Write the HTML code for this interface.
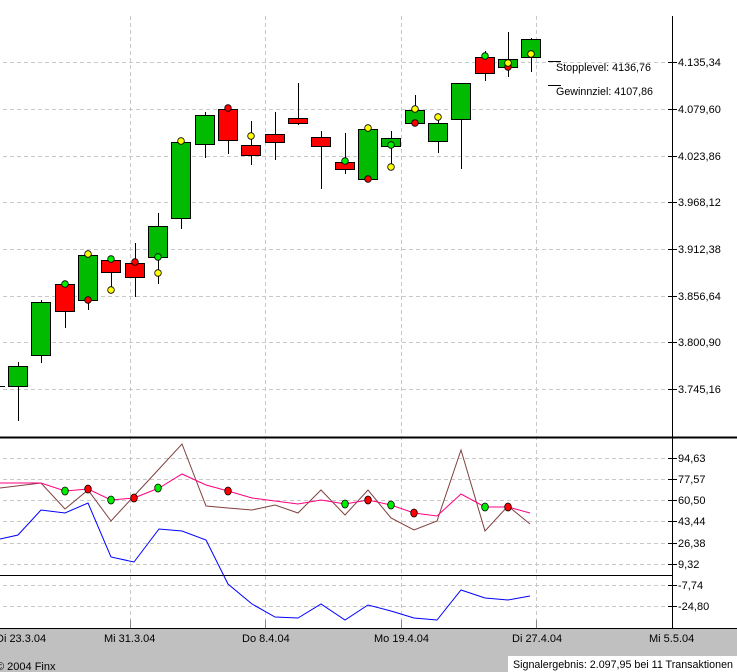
<!DOCTYPE html>
<html><head><meta charset="utf-8"><style>
html,body{margin:0;padding:0;background:#fff;}
svg{display:block;}
text{font-family:"Liberation Sans",sans-serif;font-size:11px;fill:#000;}
</style></head><body>
<svg width="737" height="672" viewBox="0 0 737 672" xmlns="http://www.w3.org/2000/svg">
<rect x="0" y="0" width="737" height="672" fill="#fff"/>
<g stroke="#c8c8c8" stroke-dasharray="4,3" stroke-width="1">
<line x1="3" y1="62.5" x2="668" y2="62.5"/><line x1="3" y1="109.5" x2="668" y2="109.5"/>
<line x1="3" y1="156.5" x2="668" y2="156.5"/><line x1="3" y1="202.5" x2="668" y2="202.5"/>
<line x1="3" y1="249.5" x2="668" y2="249.5"/><line x1="3" y1="296.5" x2="668" y2="296.5"/>
<line x1="3" y1="342.5" x2="668" y2="342.5"/><line x1="3" y1="389.5" x2="668" y2="389.5"/>
<line x1="130.5" y1="16" x2="130.5" y2="628"/><line x1="265.5" y1="16" x2="265.5" y2="628"/>
<line x1="401.5" y1="16" x2="401.5" y2="628"/><line x1="536.5" y1="16" x2="536.5" y2="628"/>
<line x1="3" y1="458.5" x2="668" y2="458.5"/><line x1="3" y1="479.5" x2="668" y2="479.5"/>
<line x1="3" y1="500.5" x2="668" y2="500.5"/><line x1="3" y1="521.5" x2="668" y2="521.5"/>
<line x1="3" y1="543.5" x2="668" y2="543.5"/><line x1="3" y1="564.5" x2="668" y2="564.5"/>
<line x1="3" y1="585.5" x2="668" y2="585.5"/><line x1="3" y1="606.5" x2="668" y2="606.5"/>
</g>
<line x1="672.5" y1="16" x2="672.5" y2="628" stroke="#000"/>
<line x1="0" y1="437.5" x2="737" y2="437.5" stroke="#000" stroke-width="2"/>
<line x1="0" y1="575.5" x2="672" y2="575.5" stroke="#000"/>
<g stroke="#000">
<line x1="668" y1="62.5" x2="677" y2="62.5"/><line x1="668" y1="109.5" x2="677" y2="109.5"/>
<line x1="668" y1="156.5" x2="677" y2="156.5"/><line x1="668" y1="202.5" x2="677" y2="202.5"/>
<line x1="668" y1="249.5" x2="677" y2="249.5"/><line x1="668" y1="296.5" x2="677" y2="296.5"/>
<line x1="668" y1="342.5" x2="677" y2="342.5"/><line x1="668" y1="389.5" x2="677" y2="389.5"/>
<line x1="668" y1="458.5" x2="677" y2="458.5"/><line x1="668" y1="479.5" x2="677" y2="479.5"/>
<line x1="668" y1="500.5" x2="677" y2="500.5"/><line x1="668" y1="521.5" x2="677" y2="521.5"/>
<line x1="668" y1="543.5" x2="677" y2="543.5"/><line x1="668" y1="564.5" x2="677" y2="564.5"/>
<line x1="668" y1="585.5" x2="677" y2="585.5"/><line x1="668" y1="606.5" x2="677" y2="606.5"/>
</g>
<g>
<text x="678" y="66">4.135,34</text><text x="678" y="113">4.079,60</text>
<text x="678" y="160">4.023,86</text><text x="678" y="206">3.968,12</text>
<text x="678" y="253">3.912,38</text><text x="678" y="300">3.856,64</text>
<text x="678" y="346">3.800,90</text><text x="678" y="393">3.745,16</text>
<text x="678" y="462">94,63</text><text x="678" y="483">77,57</text>
<text x="678" y="504">60,50</text><text x="678" y="525">43,44</text>
<text x="678" y="547">26,38</text><text x="678" y="568">9,32</text>
<text x="678" y="589">-7,74</text><text x="678" y="610">-24,80</text>
</g>
<line x1="548" y1="61.5" x2="561" y2="61.5" stroke="#000"/>
<text x="556" y="71" textLength="95" lengthAdjust="spacingAndGlyphs">Stopplevel: 4136,76</text>
<line x1="548" y1="85.5" x2="561" y2="85.5" stroke="#000"/>
<text x="556" y="95" textLength="97" lengthAdjust="spacingAndGlyphs">Gewinnziel: 4107,86</text>
<g stroke="#000" stroke-width="1">
<line x1="0" y1="386.5" x2="5" y2="386.5"/>
<line x1="18.5" y1="362" x2="18.5" y2="421"/><rect x="8.5" y="366.5" width="19" height="20" fill="#00bb00"/>
<line x1="41.5" y1="300" x2="41.5" y2="363"/><rect x="31.5" y="302.5" width="19" height="53" fill="#00bb00"/>
<line x1="65.5" y1="284" x2="65.5" y2="328"/><rect x="55.5" y="284.5" width="19" height="27" fill="#ff0000"/>
<line x1="88.5" y1="255" x2="88.5" y2="310"/><rect x="78.5" y="255.5" width="19" height="45" fill="#00bb00"/>
<line x1="111.5" y1="260" x2="111.5" y2="290"/><rect x="101.5" y="260.5" width="19" height="12" fill="#ff0000"/>
<line x1="135.5" y1="243" x2="135.5" y2="297"/><rect x="125.5" y="263.5" width="19" height="14" fill="#ff0000"/>
<line x1="158.5" y1="213" x2="158.5" y2="284"/><rect x="148.5" y="226.5" width="19" height="31" fill="#00bb00"/>
<line x1="181.5" y1="142" x2="181.5" y2="229"/><rect x="171.5" y="142.5" width="19" height="76" fill="#00bb00"/>
<line x1="205.5" y1="112" x2="205.5" y2="158"/><rect x="195.5" y="115.5" width="19" height="29" fill="#00bb00"/>
<line x1="228.5" y1="109" x2="228.5" y2="154"/><rect x="218.5" y="109.5" width="19" height="31" fill="#ff0000"/>
<line x1="251.5" y1="121" x2="251.5" y2="165"/><rect x="241.5" y="145.5" width="19" height="10" fill="#ff0000"/>
<line x1="275.5" y1="112" x2="275.5" y2="160"/><rect x="265.5" y="134.5" width="19" height="8" fill="#ff0000"/>
<line x1="298.5" y1="83" x2="298.5" y2="125"/><rect x="288.5" y="118.5" width="19" height="5" fill="#ff0000"/>
<line x1="321.5" y1="131" x2="321.5" y2="189"/><rect x="311.5" y="137.5" width="19" height="9" fill="#ff0000"/>
<line x1="345.5" y1="133" x2="345.5" y2="174"/><rect x="335.5" y="162.5" width="19" height="7" fill="#ff0000"/>
<line x1="368.5" y1="128" x2="368.5" y2="182"/><rect x="358.5" y="129.5" width="19" height="50" fill="#00bb00"/>
<line x1="391.5" y1="131" x2="391.5" y2="167"/><rect x="381.5" y="138.5" width="19" height="8" fill="#00bb00"/>
<line x1="415.5" y1="95" x2="415.5" y2="123"/><rect x="405.5" y="110.5" width="19" height="13" fill="#00bb00"/>
<line x1="438.5" y1="117" x2="438.5" y2="153"/><rect x="428.5" y="123.5" width="19" height="18" fill="#00bb00"/>
<line x1="461.5" y1="83" x2="461.5" y2="169"/><rect x="451.5" y="83.5" width="19" height="36" fill="#00bb00"/>
<line x1="485.5" y1="51" x2="485.5" y2="81"/><rect x="475.5" y="57.5" width="19" height="16" fill="#ff0000"/>
<line x1="508.5" y1="32" x2="508.5" y2="77"/><rect x="498.5" y="59.5" width="19" height="8" fill="#00bb00"/>
<line x1="531.5" y1="38" x2="531.5" y2="72"/><rect x="521.5" y="39.5" width="19" height="18" fill="#00bb00"/>
</g>
<g stroke="#000" stroke-width="0.8">
<circle cx="65" cy="284" r="3.3" fill="#00ee00"/>
<circle cx="88" cy="254" r="3.3" fill="#ffff00"/><circle cx="88" cy="300" r="3.3" fill="#ff0000"/>
<circle cx="111" cy="259" r="3.3" fill="#00ee00"/><circle cx="111" cy="290" r="3.3" fill="#ffff00"/>
<circle cx="135" cy="262" r="3.3" fill="#ff0000"/>
<circle cx="158" cy="257" r="3.3" fill="#00ee00"/><circle cx="158" cy="273" r="3.3" fill="#ffff00"/>
<circle cx="181" cy="141" r="3.3" fill="#ffff00"/>
<circle cx="228" cy="108" r="3.3" fill="#ff0000"/>
<circle cx="251" cy="136" r="3.3" fill="#ffff00"/>
<circle cx="345" cy="161" r="3.3" fill="#00ee00"/>
<circle cx="368" cy="128" r="3.3" fill="#ffff00"/><circle cx="368" cy="179" r="3.3" fill="#ff0000"/>
<circle cx="391" cy="145" r="3.3" fill="#00ee00"/><circle cx="391" cy="167" r="3.3" fill="#ffff00"/>
<circle cx="415" cy="109" r="3.3" fill="#ffff00"/><circle cx="415" cy="123" r="3.3" fill="#ff0000"/>
<circle cx="438" cy="117" r="3.3" fill="#ffff00"/>
<circle cx="485" cy="56" r="3.3" fill="#00ee00"/>
<circle cx="508" cy="67" r="3.3" fill="#ff0000"/><circle cx="508" cy="63" r="3.3" fill="#ffff00"/>
<circle cx="531" cy="54" r="3.3" fill="#ffff00"/>
</g>
<polyline fill="none" stroke="#0000ff" stroke-width="1" points="0,539 18,535 41,510 65,513 88,503 111,557 134,562 159,529 182,531 206,540 228,584 252,604 275,617 298,618 321,604 345,620 368,605 391,611 414,618 437,620 461,590 485,598 508,600 530,596"/>
<polyline fill="none" stroke="#804040" stroke-width="1" points="0,488 41,483 65,509 88,490 111,521 134,496 159,469 182,444 206,506 228,508 252,510 275,505 298,513 321,490 345,515 368,490 391,518 414,530 437,521 461,450 485,531 508,506 530,524"/>
<polyline fill="none" stroke="#ff0080" stroke-width="1" points="0,483 41,483 65,491 88,489 111,500 134,498 159,488 182,474 206,485 228,491 252,498 275,501 298,504 321,500 345,504 368,500 391,505 414,513 437,516 461,494 485,507 508,507 530,513"/>
<g stroke="#000" stroke-width="0.8">
<ellipse cx="65" cy="491" rx="3.3" ry="4" fill="#00ee00"/><ellipse cx="88" cy="489" rx="3.3" ry="4" fill="#ff0000"/>
<ellipse cx="111" cy="500" rx="3.3" ry="4" fill="#00ee00"/><ellipse cx="134" cy="498" rx="3.3" ry="4" fill="#ff0000"/>
<ellipse cx="158" cy="488" rx="3.3" ry="4" fill="#00ee00"/><ellipse cx="228" cy="491" rx="3.3" ry="4" fill="#ff0000"/>
<ellipse cx="345" cy="504" rx="3.3" ry="4" fill="#00ee00"/><ellipse cx="368" cy="500" rx="3.3" ry="4" fill="#ff0000"/>
<ellipse cx="391" cy="505" rx="3.3" ry="4" fill="#00ee00"/><ellipse cx="414" cy="513" rx="3.3" ry="4" fill="#ff0000"/>
<ellipse cx="485" cy="507" rx="3.3" ry="4" fill="#00ee00"/><ellipse cx="508" cy="507" rx="3.3" ry="4" fill="#ff0000"/>
</g>
<rect x="0" y="629" width="737" height="43" fill="#c0c0c0"/>
<line x1="0" y1="628.5" x2="737" y2="628.5" stroke="#000"/>
<g stroke="#888"><line x1="130.5" y1="620" x2="130.5" y2="628"/><line x1="265.5" y1="620" x2="265.5" y2="628"/><line x1="401.5" y1="620" x2="401.5" y2="628"/><line x1="536.5" y1="620" x2="536.5" y2="628"/></g>
<line x1="672.5" y1="620" x2="672.5" y2="628" stroke="#000"/>
<text x="-4" y="642">Di 23.3.04</text>
<text x="104" y="642">Mi 31.3.04</text>
<text x="242" y="642">Do 8.4.04</text>
<text x="374" y="642">Mo 19.4.04</text>
<text x="512" y="642">Di 27.4.04</text>
<text x="649" y="642">Mi 5.5.04</text>
<text x="-4" y="670">© 2004 Finx</text>
<rect x="508" y="656" width="229" height="16" fill="#fff"/>
<text x="513" y="668" textLength="220" lengthAdjust="spacingAndGlyphs">Signalergebnis: 2.097,95 bei 11 Transaktionen</text>
</svg>
</body></html>
